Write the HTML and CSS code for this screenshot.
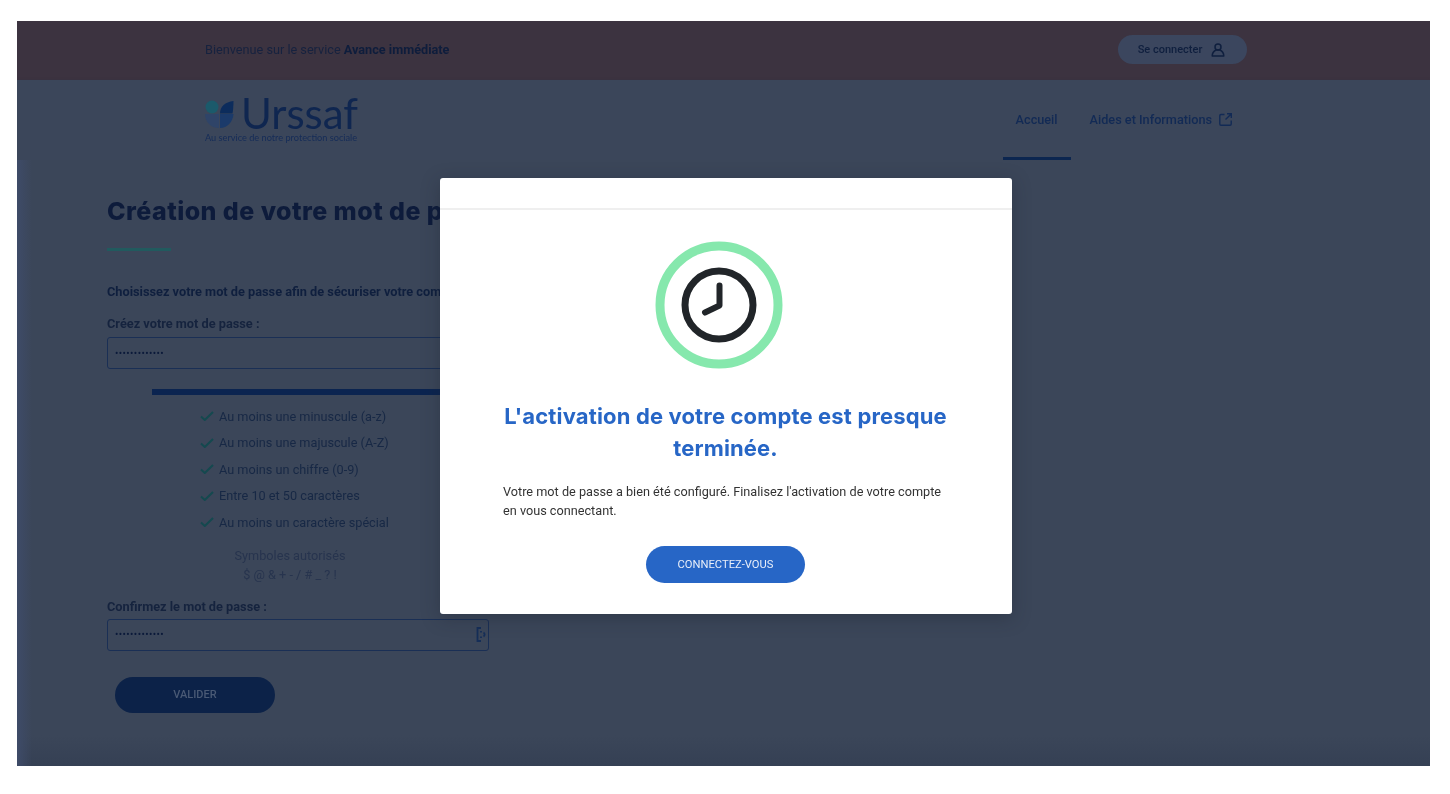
FILE: index.html
```html
<!DOCTYPE html>
<html lang="fr">
<head>
  <meta charset="UTF-8">
  <title>Création de votre mot de passe</title>
  <link rel="stylesheet" href="styles.css">
</head>
<body>
  <div class="frame">
    <div class="topbar">
      <p class="welcome">Bienvenue sur le service <b>Avance immédiate</b></p>
      <a class="login" href="#">
        <span class="login-text">Se connecter</span>
        <svg width="14" height="14" viewBox="0 0 14 14" fill="none" stroke="#0f1f3e" stroke-width="1.500">
          <circle cx="7" cy="4" r="3"/>
          <path d="M1.200 13h11.600c0-3-2.200-5.200-3.800-6H5C3.400 7.800 1.200 10 1.200 13z" stroke-linejoin="round"/>
        </svg>
      </a>
    </div>

    <div class="nav">
      <div class="logo">
        <div class="logo-main">
          <svg width="29" height="29" viewBox="0 0 29 29">
            <circle cx="7" cy="8" r="6.500" fill="#1b5a6b"/>
            <path d="M15 14.500c0-7 5-11.500 13.500-12.500 0 5-.5 10-1 12.500z" fill="#0c2c5c"/>
            <path d="M0 15h14v14C6 29 0 23 0 15z" fill="#2f4468"/>
            <path d="M15 15h13.500C28 23 22 29 15 29z" fill="#1b3a6a"/>
          </svg>
          <span class="logo-name">Urssaf</span>
        </div>
        <div class="logo-sub">Au service de notre protection sociale</div>
      </div>
      <div class="menu">
        <a class="menu-item active" href="#">Accueil</a>
        <a class="menu-item" href="#">
          Aides et Informations
          <svg width="13" height="13" viewBox="0 0 13 13" fill="none" stroke="#122a55" stroke-width="1.400">
            <path d="M5.500 1.500H2a1.200 1.200 0 0 0-1.200 1.200V11A1.200 1.200 0 0 0 2 12.200h9a1.200 1.200 0 0 0 1.200-1.200V7.500"/>
            <path d="M8 .8h4.300v4.300M12.200 .9L6.500 6.600"/>
          </svg>
        </a>
      </div>
    </div>

    <div class="content">
      <h1>Création de votre mot de passe</h1>
      <div class="title-rule"></div>

      <p class="intro">Choisissez votre mot de passe afin de sécuriser votre compte</p>

      <label class="field-label">Créez votre mot de passe :</label>
      <div class="field"><span class="dots">•••••••••••••</span></div>

      <div class="strength"></div>

      <ul class="rules">
        <li><svg width="14" height="10" viewBox="0 0 14 10" fill="none" stroke="#14494f" stroke-width="2"><path d="M1 5.500L4.800 9L13 1"/></svg>Au moins une minuscule (a-z)</li>
        <li><svg width="14" height="10" viewBox="0 0 14 10" fill="none" stroke="#14494f" stroke-width="2"><path d="M1 5.500L4.800 9L13 1"/></svg>Au moins une majuscule (A-Z)</li>
        <li><svg width="14" height="10" viewBox="0 0 14 10" fill="none" stroke="#14494f" stroke-width="2"><path d="M1 5.500L4.800 9L13 1"/></svg>Au moins un chiffre (0-9)</li>
        <li><svg width="14" height="10" viewBox="0 0 14 10" fill="none" stroke="#14494f" stroke-width="2"><path d="M1 5.500L4.800 9L13 1"/></svg>Entre 10 et 50 caractères</li>
        <li><svg width="14" height="10" viewBox="0 0 14 10" fill="none" stroke="#14494f" stroke-width="2"><path d="M1 5.500L4.800 9L13 1"/></svg>Au moins un caractère spécial</li>
      </ul>

      <p class="symbols">Symboles autorisés<br>$ @ &amp; + - / # _ ? !</p>

      <label class="field-label confirm">Confirmez le mot de passe :</label>
      <div class="field field-confirm">
        <span class="dots">•••••••••••••</span>
        <svg width="10" height="15" viewBox="0 0 10 15" fill="none" stroke="#152e58" stroke-width="1.800">
          <path d="M5 1H1.500v13H5M5 4v1.500M5 9.500V11M7.500 5.500c1.500 1 1.500 3 0 4"/>
        </svg>
      </div>

      <button class="btn-validate">VALIDER</button>
    </div>
  </div>

  <div class="modal">
    <div class="modal-head"></div>
    <div class="modal-body">
      <svg class="status-icon" width="128" height="128" viewBox="0 0 128 128" fill="none">
        <circle cx="64" cy="64" r="59" stroke="#86e8ad" stroke-width="9"/>
        <circle cx="64" cy="64" r="34" stroke="#212529" stroke-width="7"/>
        <path d="M64.500 44.500V64.500L50 71.500" stroke="#212529" stroke-width="6" stroke-linecap="round" stroke-linejoin="round"/>
      </svg>
      <h2>L'activation de votre compte est presque terminée.</h2>
      <p>Votre mot de passe a bien été configuré. Finalisez l'activation de votre compte en vous connectant.</p>
      <button class="btn-connect">CONNECTEZ-VOUS</button>
    </div>
  </div>
</body>
</html>
```

FILE: styles.css
```css
* {
  box-sizing: border-box;
}

html, body {
  height: 100%;
}

body {
  margin: 0;
  padding: 21px 20px 28px 17px;
  background: #fff;
  font-family: Roboto, "Liberation Sans", sans-serif;
  color: #0f1f3e;
  overflow: hidden;
}

.frame {
  height: 745px;
  display: flex;
  flex-direction: column;
  background: #3b4659;
  overflow: hidden;
  filter: blur(0.5px);
}

/* top bar */
.topbar {
  height: 59px;
  flex: none;
  display: flex;
  align-items: center;
  justify-content: space-between;
  padding: 0 183px 2px 188px;
  background: #3c3340;
}

.welcome {
  margin: 0;
  font-size: 12.700px;
  color: #16223f;
}

.welcome b {
  font-weight: 700;
  color: #0e1d3c;
}

.login {
  width: 129px;
  height: 29px;
  display: flex;
  align-items: center;
  justify-content: center;
  gap: 9px;
  padding-right: 2px;
  border-radius: 15px;
  background: #3b465e;
  color: #0f1f3e;
  font-size: 11px;
  font-weight: 500;
  text-decoration: none;
}

.login-text {
  margin-top: -1px;
}

/* header nav */
.nav {
  height: 80px;
  flex: none;
  display: flex;
  justify-content: space-between;
  padding: 0 185px 0 188px;
  background: #3b465a;
  box-shadow: 0 1px 3px rgba(40, 50, 70, 0.5);
}

.logo {
  padding-top: 15px;
}

.logo-main {
  display: flex;
  align-items: center;
  gap: 7px;
  height: 36px;
}

.logo-name {
  font-family: Lato, sans-serif;
  font-size: 42px;
  font-weight: 400;
  line-height: 36px;
  color: #0f2650;
}

.logo-sub {
  margin-top: 1px;
  font-family: Lato, sans-serif;
  font-size: 9.200px;
  color: #152c58;
}

.menu {
  display: flex;
}

.menu-item {
  display: flex;
  align-items: center;
  gap: 7px;
  height: 80px;
  padding: 0 13px 2px;
  margin-left: 6px;
  color: #122a55;
  font-size: 12.700px;
  font-weight: 500;
  text-decoration: none;
}

.menu-item.active {
  border-bottom: 3px solid #0c2650;
  padding-bottom: 0;
  padding-top: 1px;
}

/* form behind the modal */
.content {
  flex: 1;
  padding: 36px 0 0 90px;
  background:
    linear-gradient(to right, #3e4b68 0, rgba(62, 75, 104, 0) 15px),
    linear-gradient(to bottom, #3b4659 0, #3b4659 575px, #354054 606px);
}

h1 {
  margin: 0;
  font-family: Inter, sans-serif;
  font-size: 25px;
  font-weight: 800;
  line-height: 30px;
  letter-spacing: 0.450px;
  white-space: nowrap;
  color: #0d1b3b;
}

.title-rule {
  width: 64px;
  height: 3px;
  margin-top: 22px;
  background: #215a5e;
}

.intro {
  height: 14px;
  margin: 34px 0 0;
  font-size: 12.750px;
  font-weight: 700;
  line-height: 14px;
  white-space: nowrap;
  color: #0f1f3e;
}

.field-label {
  display: block;
  margin-top: 18px;
  font-size: 12.750px;
  font-weight: 700;
  line-height: 14px;
  color: #15233e;
}

.field {
  width: 382px;
  height: 32px;
  display: flex;
  align-items: center;
  justify-content: space-between;
  margin-top: 6px;
  padding: 0 2px 0 7px;
  border: 1px solid #1a2f55;
  border-radius: 3px;
}

.dots {
  font-size: 10px;
  letter-spacing: 0.400px;
  color: #0b1a3a;
}

.strength {
  width: 340px;
  height: 6px;
  margin: 20px 0 0 45px;
  background: #0b2450;
}

.rules {
  margin: 8px 0 0;
  padding: 0 0 0 93px;
  list-style: none;
}

.rules li {
  display: flex;
  align-items: center;
  gap: 5px;
  height: 26.500px;
  font-size: 12.700px;
  color: #172845;
}

.symbols {
  width: 366px;
  margin: 10px 0 0;
  font-size: 12.700px;
  line-height: 19px;
  text-align: center;
  color: #27344e;
}

.field-label.confirm {
  margin-top: 16px;
}

.field-confirm {
  margin-top: 5px;
}

.btn-validate {
  width: 160px;
  height: 36px;
  display: block;
  margin: 26px 0 0 8px;
  border: none;
  border-radius: 18px;
  background: #0c2248;
  color: #4a5a75;
  font-family: Roboto, sans-serif;
  font-size: 11px;
  font-weight: 500;
}

/* modal */
.modal {
  position: absolute;
  left: 440px;
  top: 178px;
  width: 572px;
  height: 436px;
  background: #fff;
  border-radius: 3px;
  box-shadow: 0 4px 18px rgba(30, 35, 45, 0.35);
}

.modal-head {
  height: 32px;
  border-bottom: 2px solid #efefef;
}

.modal-body {
  display: flex;
  flex-direction: column;
  align-items: center;
  padding: 31px 64px 0 63px;
  filter: blur(0.35px);
}

.status-icon {
  margin-right: 14px;
}

.modal h2 {
  margin: 31px -10px 0;
  font-family: Inter, sans-serif;
  font-size: 22px;
  font-weight: 700;
  line-height: 32px;
  letter-spacing: 0.150px;
  text-align: center;
  color: #2766c6;
}

.modal p {
  width: 100%;
  margin: 18px 0 0;
  font-size: 12.700px;
  line-height: 19px;
  color: #333;
}

.btn-connect {
  width: 159px;
  height: 37px;
  margin-top: 26px;
  border: none;
  border-radius: 19px;
  background: #2766c6;
  color: #e8eef9;
  font-family: Roboto, sans-serif;
  font-size: 11.200px;
  font-weight: 400;
}
```
